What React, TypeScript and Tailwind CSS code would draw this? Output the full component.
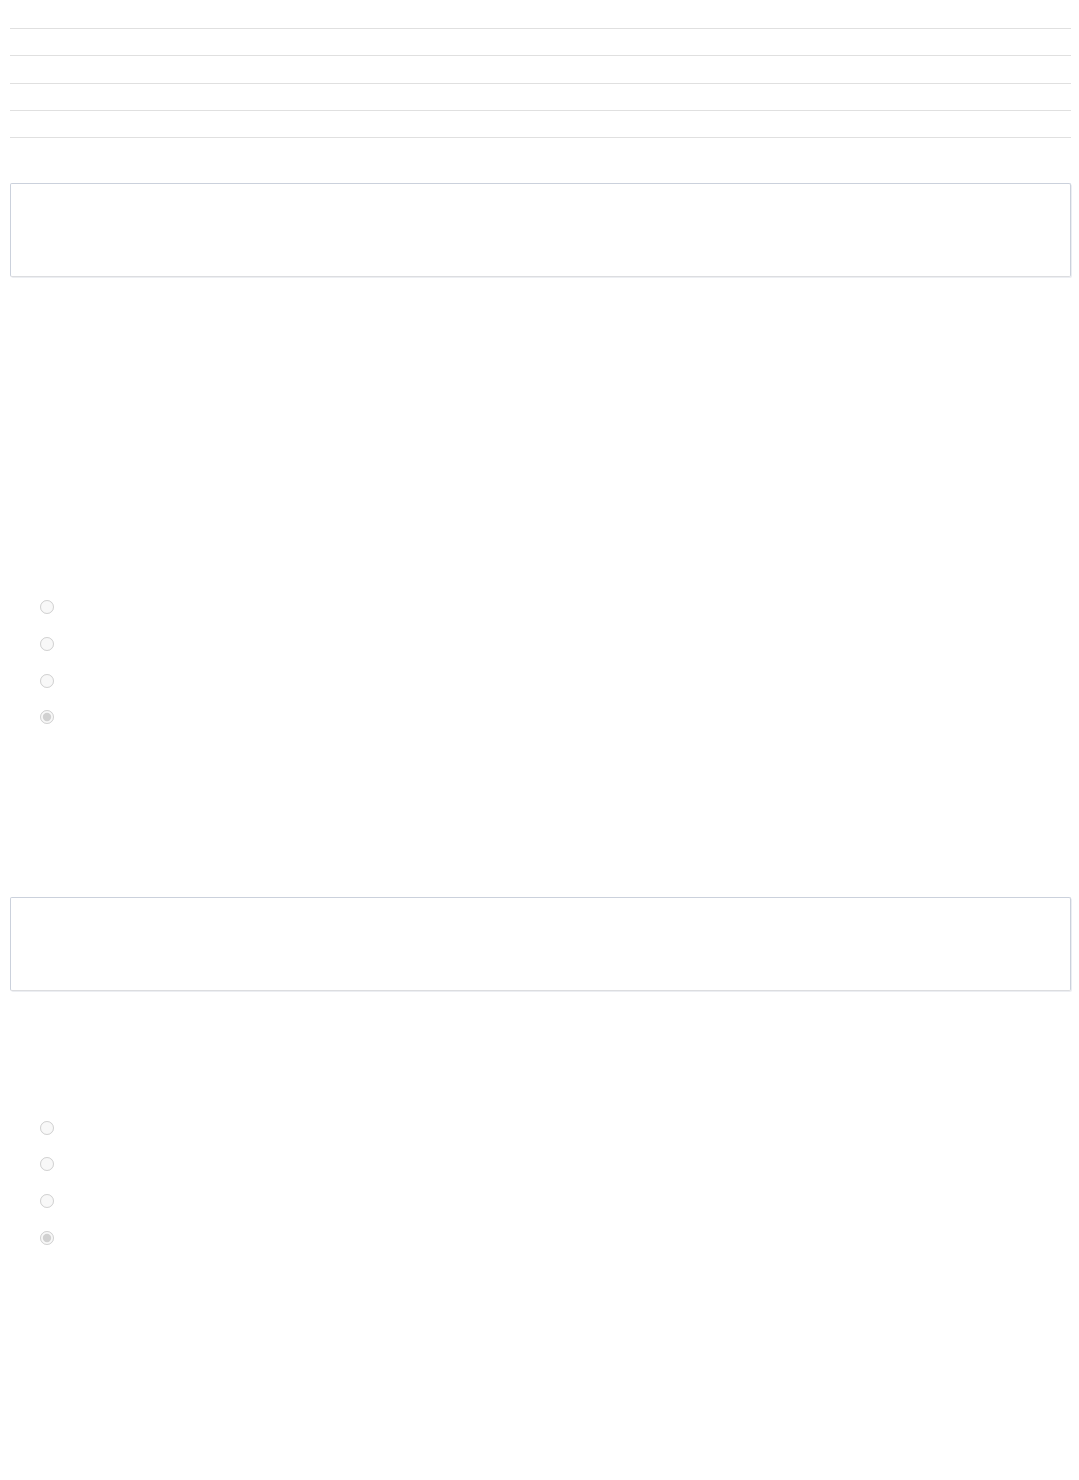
const rowHeights = ["h-[29px]", "h-[27px]", "h-[28px]", "h-[27px]", "h-[27px]"];

function Lines() {
  return (
    <div>
      {rowHeights.map((h, i) => (
        <div key={i} className={`${h} border-b border-[#e0e0e0]`} />
      ))}
    </div>
  );
}

function Box({ className = "" }: { className?: string }) {
  return (
    <div
      className={`h-[94px] rounded-[2px] border border-[#cbd1dc] border-b-[#dcdde0] shadow-[1px_1px_0_#eceef2] ${className}`}
    />
  );
}

function Radios({ name, rows, className = "" }: { name: string; rows: string[]; className?: string }) {
  return (
    <div className={`flex flex-col pl-[30px] ${className}`}>
      {rows.map((h, i) => (
        <label key={i} className={`flex items-start ${h}`}>
          <input
            type="radio"
            name={name}
            disabled
            defaultChecked={i === rows.length - 1}
            className="h-[14px] w-[14px]"
          />
        </label>
      ))}
    </div>
  );
}

export default function App() {
  return (
    <div className="min-h-[1480px] bg-white font-['Liberation_Sans',sans-serif]">
      <div className="ml-[10px] w-[1061px]">
        <Lines />
        <Box className="mt-[45px]" />
        <Radios
          name="q1"
          rows={["h-[37px]", "h-[37px]", "h-[36px]", "h-[37px]"]}
          className="mt-[323px]"
        />
        <Box className="mt-[150px]" />
        <Radios
          name="q2"
          rows={["h-[36px]", "h-[37px]", "h-[37px]", "h-[37px]"]}
          className="mt-[130px]"
        />
      </div>
    </div>
  );
}
